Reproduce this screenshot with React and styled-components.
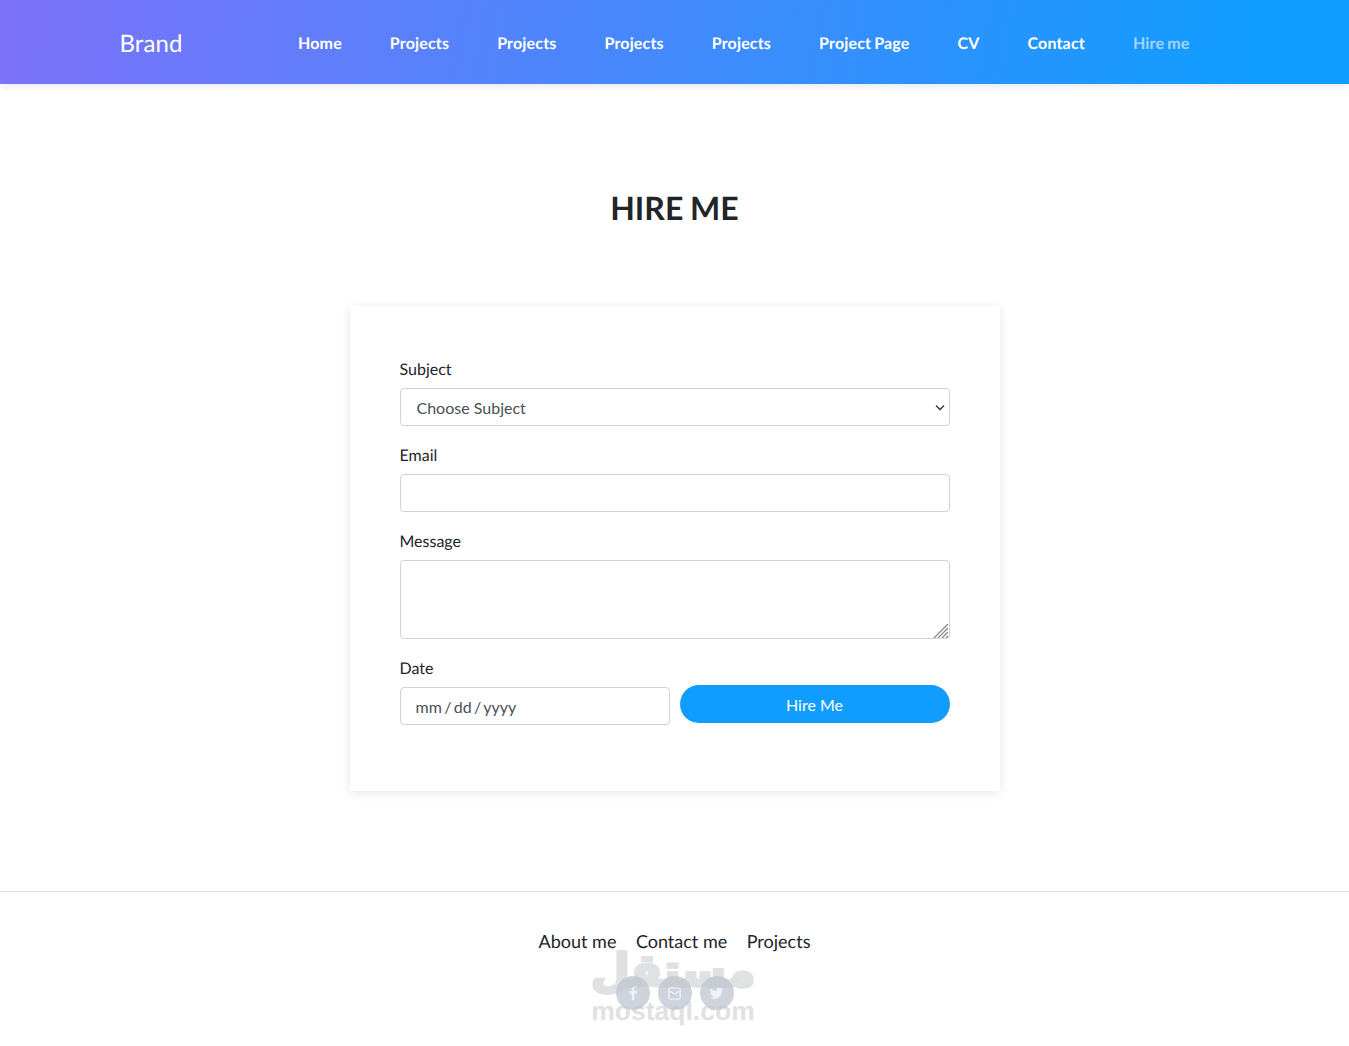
import React from 'react';
import styled, { createGlobalStyle } from 'styled-components';

const GlobalStyle = createGlobalStyle`
  * {
    box-sizing: border-box;
  }

  body {
    margin: 0;
    background: #fff;
    color: #212529;
    font-family: Lato, "Liberation Sans", sans-serif;
    font-size: 16px;
    line-height: 1.5;
    text-rendering: geometricPrecision;
  }
`;

const Page = styled.div`
  position: relative;
  min-height: 1046px;
`;

const Navbar = styled.nav`
  height: 84px;
  padding: 4px 119.5px 0;
  display: flex;
  align-items: center;
  background: linear-gradient(100deg, #7d72f9 0%, #119dff 92%);
  box-shadow: 0 2px 8px rgba(0, 0, 0, 0.1);
`;

const Brand = styled.a`
  width: 155px;
  color: #fff;
  font-size: 24px;
  line-height: 36px;
  letter-spacing: 0.1px;
  flex-shrink: 0;
`;

const NavLinks = styled.div`
  display: flex;
  gap: 48px;
  margin-left: 23.5px;
`;

const NavLink = styled.a`
  color: ${(p) => (p.$muted ? 'rgba(255, 255, 255, 0.6)' : '#fff')};
  font-weight: 700;
  font-size: 16px;
  letter-spacing: 0.16px;
  word-spacing: -1px;
  white-space: nowrap;
`;

const Main = styled.main`
  padding-top: 100px;
  display: flex;
  flex-direction: column;
  align-items: center;
`;

const Title = styled.h1`
  margin: 0 0 74px;
  font-size: 32px;
  font-weight: 700;
  line-height: 48px;
  word-spacing: -1px;
  color: #212529;
`;

const Card = styled.form`
  width: 650px;
  height: 485px;
  padding: 50px;
  background: #fff;
  box-shadow: 0 2px 10px rgba(0, 0, 0, 0.1);
`;

const Field = styled.div`
  margin-bottom: 16px;
`;

const Label = styled.label`
  display: block;
  padding-top: 2px;
  margin-bottom: 6px;
  font-size: 16px;
  line-height: 24px;
`;

const SelectWrap = styled.div`
  position: relative;
  height: 38px;
`;

const Select = styled.select`
  width: 100%;
  height: 38px;
  padding: 2px 16px 0;
  appearance: none;
  background: #fff;
  border: 1px solid #ced4da;
  border-radius: 4px;
  color: #495057;
  font: inherit;
`;

const Chevron = styled.svg`
  position: absolute;
  top: 16px;
  right: 5px;
  width: 10px;
  height: 7px;
  pointer-events: none;
`;

const Input = styled.input`
  display: block;
  width: 100%;
  height: 38px;
  padding: 0 15px;
  background: #fff;
  border: 1px solid #ced4da;
  border-radius: 4px;
  color: #495057;
  font: inherit;
  word-spacing: ${(p) => (p.$tight ? '-1.75px' : 'normal')};
`;

const TextAreaWrap = styled.div`
  position: relative;
  height: 79px;
`;

const TextArea = styled.textarea`
  display: block;
  width: 100%;
  height: 79px;
  background: #fff;
  border: 1px solid #ced4da;
  border-radius: 4px;
  font: inherit;
  resize: none;
`;

const ResizeGrip = styled.svg`
  position: absolute;
  right: 1px;
  bottom: 1px;
  width: 16px;
  height: 15px;
  pointer-events: none;
`;

const DateRow = styled.div`
  display: grid;
  grid-template-columns: 270px 270px;
  gap: 10px;
`;

const SubmitButton = styled.button`
  height: 38px;
  margin-top: 30px;
  padding-top: 3px;
  border: 0;
  border-radius: 20px;
  background: #119dff;
  color: #fff;
  font: inherit;
`;

const Footer = styled.footer`
  margin-top: 100px;
  border-top: 1px solid #dee2e6;
  padding-top: 36px;
  display: flex;
  flex-direction: column;
  align-items: center;
`;

const FooterLinks = styled.div`
  display: flex;
  gap: 19.5px;
  font-size: 18px;
  line-height: 27px;
  color: #212529;
`;

const Socials = styled.div`
  margin-top: 21px;
  display: flex;
  gap: 8px;
`;

const Social = styled.a`
  width: 34px;
  height: 34px;
  border-radius: 50%;
  background: #ced3dd;
  display: flex;
  align-items: center;
  justify-content: center;
  color: #f0f1f4;
`;

const Watermark = styled.div`
  position: absolute;
  left: 573px;
  top: 941px;
  width: 200px;
  height: 90px;
  color: #c2c4c8;
  opacity: 0.5;
  text-align: center;
  pointer-events: none;
`;

const WatermarkArabic = styled.div`
  font-family: "DejaVu Sans", sans-serif;
  font-weight: 700;
  font-size: 45px;
  line-height: 60px;
  -webkit-text-stroke: 3px #c2c4c8;
`;

const WatermarkLatin = styled.div`
  margin-top: -2px;
  font-family: "Liberation Sans", sans-serif;
  font-weight: 700;
  font-size: 26.5px;
  line-height: 24px;
`;

const navItems = ['Home', 'Projects', 'Projects', 'Projects', 'Projects', 'Project Page', 'CV', 'Contact'];

const App = () => (
  <Page>
    <GlobalStyle />
    <Navbar>
      <Brand>Brand</Brand>
      <NavLinks>
        {navItems.map((item, i) => (
          <NavLink key={i}>{item}</NavLink>
        ))}
        <NavLink $muted>Hire me</NavLink>
      </NavLinks>
    </Navbar>
    <Main>
      <Title>HIRE ME</Title>
      <Card>
        <Field>
          <Label>Subject</Label>
          <SelectWrap>
            <Select defaultValue="">
              <option value="">Choose Subject</option>
            </Select>
            <Chevron viewBox="0 0 10 7">
              <path d="M1 1.5 L5 5.5 L9 1.5" fill="none" stroke="#444" strokeWidth="1.6" />
            </Chevron>
          </SelectWrap>
        </Field>
        <Field>
          <Label>Email</Label>
          <Input type="email" />
        </Field>
        <Field>
          <Label>Message</Label>
          <TextAreaWrap>
            <TextArea />
            <ResizeGrip viewBox="0 0 16 15">
              <path d="M1 15 L15 1 M5 15 L15 5 M9 15 L15 9 M13 15 L15 13" stroke="#888" strokeWidth="1.3" fill="none" />
            </ResizeGrip>
          </TextAreaWrap>
        </Field>
        <DateRow>
          <div>
            <Label>Date</Label>
            <Input type="text" $tight defaultValue="mm / dd / yyyy" />
          </div>
          <SubmitButton type="button">Hire Me</SubmitButton>
        </DateRow>
      </Card>
    </Main>
    <Footer>
      <FooterLinks>
        <span>About me</span>
        <span>Contact me</span>
        <span>Projects</span>
      </FooterLinks>
      <Socials>
        <Social>
          <svg width="16" height="16" viewBox="0 0 24 24" fill="currentColor">
            <path d="M14 23v-10h3.4l.6-4H14V6.500c0-1.200.4-2 2-2h2.100V1.100C17.700 1 16.500 1 15.200 1 12.200 1 10 2.800 10 6.200V9H6.600v4H10v10z" />
          </svg>
        </Social>
        <Social>
          <svg width="13" height="13" viewBox="0 0 16 16" fill="none" stroke="currentColor" strokeWidth="1.6">
            <rect x="1" y="1" width="14" height="14" rx="2" />
            <path d="M1 6h3.500a4 4 0 0 0 7 0H15" />
          </svg>
        </Social>
        <Social>
          <svg width="17" height="15" viewBox="0 0 24 24" fill="currentColor">
            <path d="M23 5a9 9 0 0 1-2.600.700 4.500 4.500 0 0 0 2-2.500 9 9 0 0 1-2.900 1.100 4.500 4.500 0 0 0-7.700 4.100A12.800 12.800 0 0 1 2.500 3.700a4.500 4.500 0 0 0 1.400 6 4.500 4.500 0 0 1-2-.600c0 2.200 1.500 4 3.600 4.500a4.500 4.500 0 0 1-2 .100 4.500 4.500 0 0 0 4.200 3.100A9 9 0 0 1 1 18.700 12.800 12.800 0 0 0 8 20.800c8.300 0 13-7 12.900-13.200A9 9 0 0 0 23 5z" />
          </svg>
        </Social>
      </Socials>
    </Footer>
    <Watermark>
      <WatermarkArabic>مستقل</WatermarkArabic>
      <WatermarkLatin>mostaql.com</WatermarkLatin>
    </Watermark>
  </Page>
);

export default App;
